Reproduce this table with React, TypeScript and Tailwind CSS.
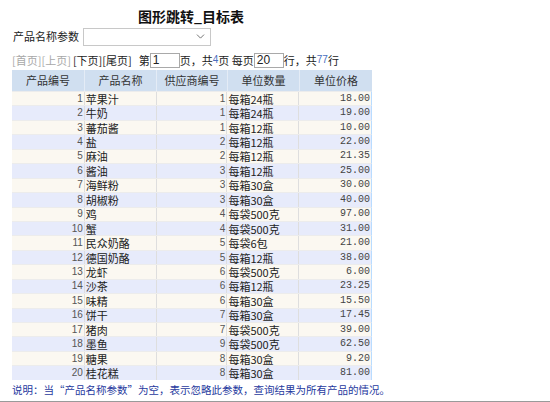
import { ChevronDown } from "lucide-react";

const rows: [number, string, number, string, string][] = [
    [1, "苹果汁", 1, "每箱24瓶", "18.00"],
    [2, "牛奶", 1, "每箱24瓶", "19.00"],
    [3, "蕃茄酱", 1, "每箱12瓶", "10.00"],
    [4, "盐", 2, "每箱12瓶", "22.00"],
    [5, "麻油", 2, "每箱12瓶", "21.35"],
    [6, "酱油", 3, "每箱12瓶", "25.00"],
    [7, "海鲜粉", 3, "每箱30盒", "30.00"],
    [8, "胡椒粉", 3, "每箱30盒", "40.00"],
    [9, "鸡", 4, "每袋500克", "97.00"],
    [10, "蟹", 4, "每袋500克", "31.00"],
    [11, "民众奶酪", 5, "每袋6包", "21.00"],
    [12, "德国奶酪", 5, "每箱12瓶", "38.00"],
    [13, "龙虾", 6, "每袋500克", "6.00"],
    [14, "沙茶", 6, "每箱12瓶", "23.25"],
    [15, "味精", 6, "每箱30盒", "15.50"],
    [16, "饼干", 7, "每箱30盒", "17.45"],
    [17, "猪肉", 7, "每袋500克", "39.00"],
    [18, "墨鱼", 9, "每袋500克", "62.50"],
    [19, "糖果", 8, "每箱30盒", "9.20"],
    [20, "桂花糕", 8, "每箱30盒", "81.00"],
];

const headers = ["产品编号", "产品名称", "供应商编号", "单位数量", "单位价格"];
const widths = ["w-[73px]", "w-[72px]", "w-[71px]", "w-[72px]", "w-[72px]"];

const cjk = "font-['Noto_Sans_CJK_SC',sans-serif]";

const App = () => {
    return (
        <div
            className={`relative w-[550px] h-[402px] bg-white border-b border-[#9a9a9a] text-[11px] text-[#222] ${cjk}`}
        >
            <div className="w-[382px] pt-[6px] h-[27px] text-center text-[14px] font-bold leading-[20px] text-[#111]">
                图形跳转_目标表
            </div>
            <div className="flex items-center pl-[13px] h-[19px]">
                <span className="leading-[13px]">产品名称参数</span>
                <div className="ml-[4px] flex items-center justify-end w-[128px] h-[18px] border border-[#c8c8c8] pr-[3px]">
                    <ChevronDown size={13} strokeWidth={1.5} className="text-[#555]" />
                </div>
            </div>
            <div className="flex items-center pl-[12px] mt-[6px] h-[16px] leading-[12px]">
                <span className="text-[#a8a8a8]">[首页][上页]</span>
                <span className="ml-[2px]">[下页][尾页]</span>
                <span className="ml-[7px]">第</span>
                <div className="w-[30px] h-[15px] border border-[#a9a9a9] pl-[2px] text-[12px] leading-[13px] font-['Liberation_Sans',sans-serif]">
                    1
                </div>
                <span>页，共</span>
                <span className="text-[10px] text-[#4a6fbf] font-['Liberation_Sans',sans-serif]">4</span>
                <span>页 每页</span>
                <div className="w-[30px] h-[15px] border border-[#a9a9a9] pl-[2px] text-[12px] leading-[13px] font-['Liberation_Sans',sans-serif]">
                    20
                </div>
                <span>行，共</span>
                <span className="text-[10px] text-[#4a6fbf] font-['Liberation_Sans',sans-serif]">77</span>
                <span>行</span>
            </div>
            <div className="ml-[12px] mt-[2px] w-[360px]">
                <div className="flex h-[21px] bg-[#d0dff0]">
                    {headers.map((h, i) => (
                        <div
                            key={h}
                            className={`${widths[i]} flex items-center justify-center text-[#333] border-r border-[#e4ecf6] last:border-r-0`}
                        >
                            {h}
                        </div>
                    ))}
                </div>
                {rows.map((r, idx) => (
                    <div
                        key={r[0]}
                        className={`flex h-[14.45px] leading-[12px] border-t border-[#ececec] ${
                            idx % 2 === 0 ? "bg-[#fbf8f1]" : "bg-[#e7ebfb]"
                        } border-r border-r-[#b9dcff]`}
                    >
                        <div className="w-[73px] pr-[1px] flex items-center justify-end text-[10px] text-[#555] font-['Liberation_Sans',sans-serif] border-r border-[#dedede]">
                            {r[0]}
                        </div>
                        <div className="w-[72px] pl-[1px] flex items-center border-r border-[#dedede]">{r[1]}</div>
                        <div className="w-[71px] pr-[1px] flex items-center justify-end text-[10px] text-[#555] font-['Liberation_Sans',sans-serif] border-r border-[#dedede]">
                            {r[2]}
                        </div>
                        <div className="w-[72px] pl-[1px] flex items-center border-r border-[#dedede]">{r[3]}</div>
                        <div className="w-[72px] pr-[1px] flex items-center justify-end text-[10px] text-[#444] font-['Liberation_Mono',monospace]">
                            {r[4]}
                        </div>
                    </div>
                ))}
            </div>
            <div className="pl-[12px] mt-[3px] leading-[14px] text-[10.5px] text-[#1f3a9e]">
                说明：当“产品名称参数”为空，表示忽略此参数，查询结果为所有产品的情况。
            </div>
        </div>
    );
};

export default App;
